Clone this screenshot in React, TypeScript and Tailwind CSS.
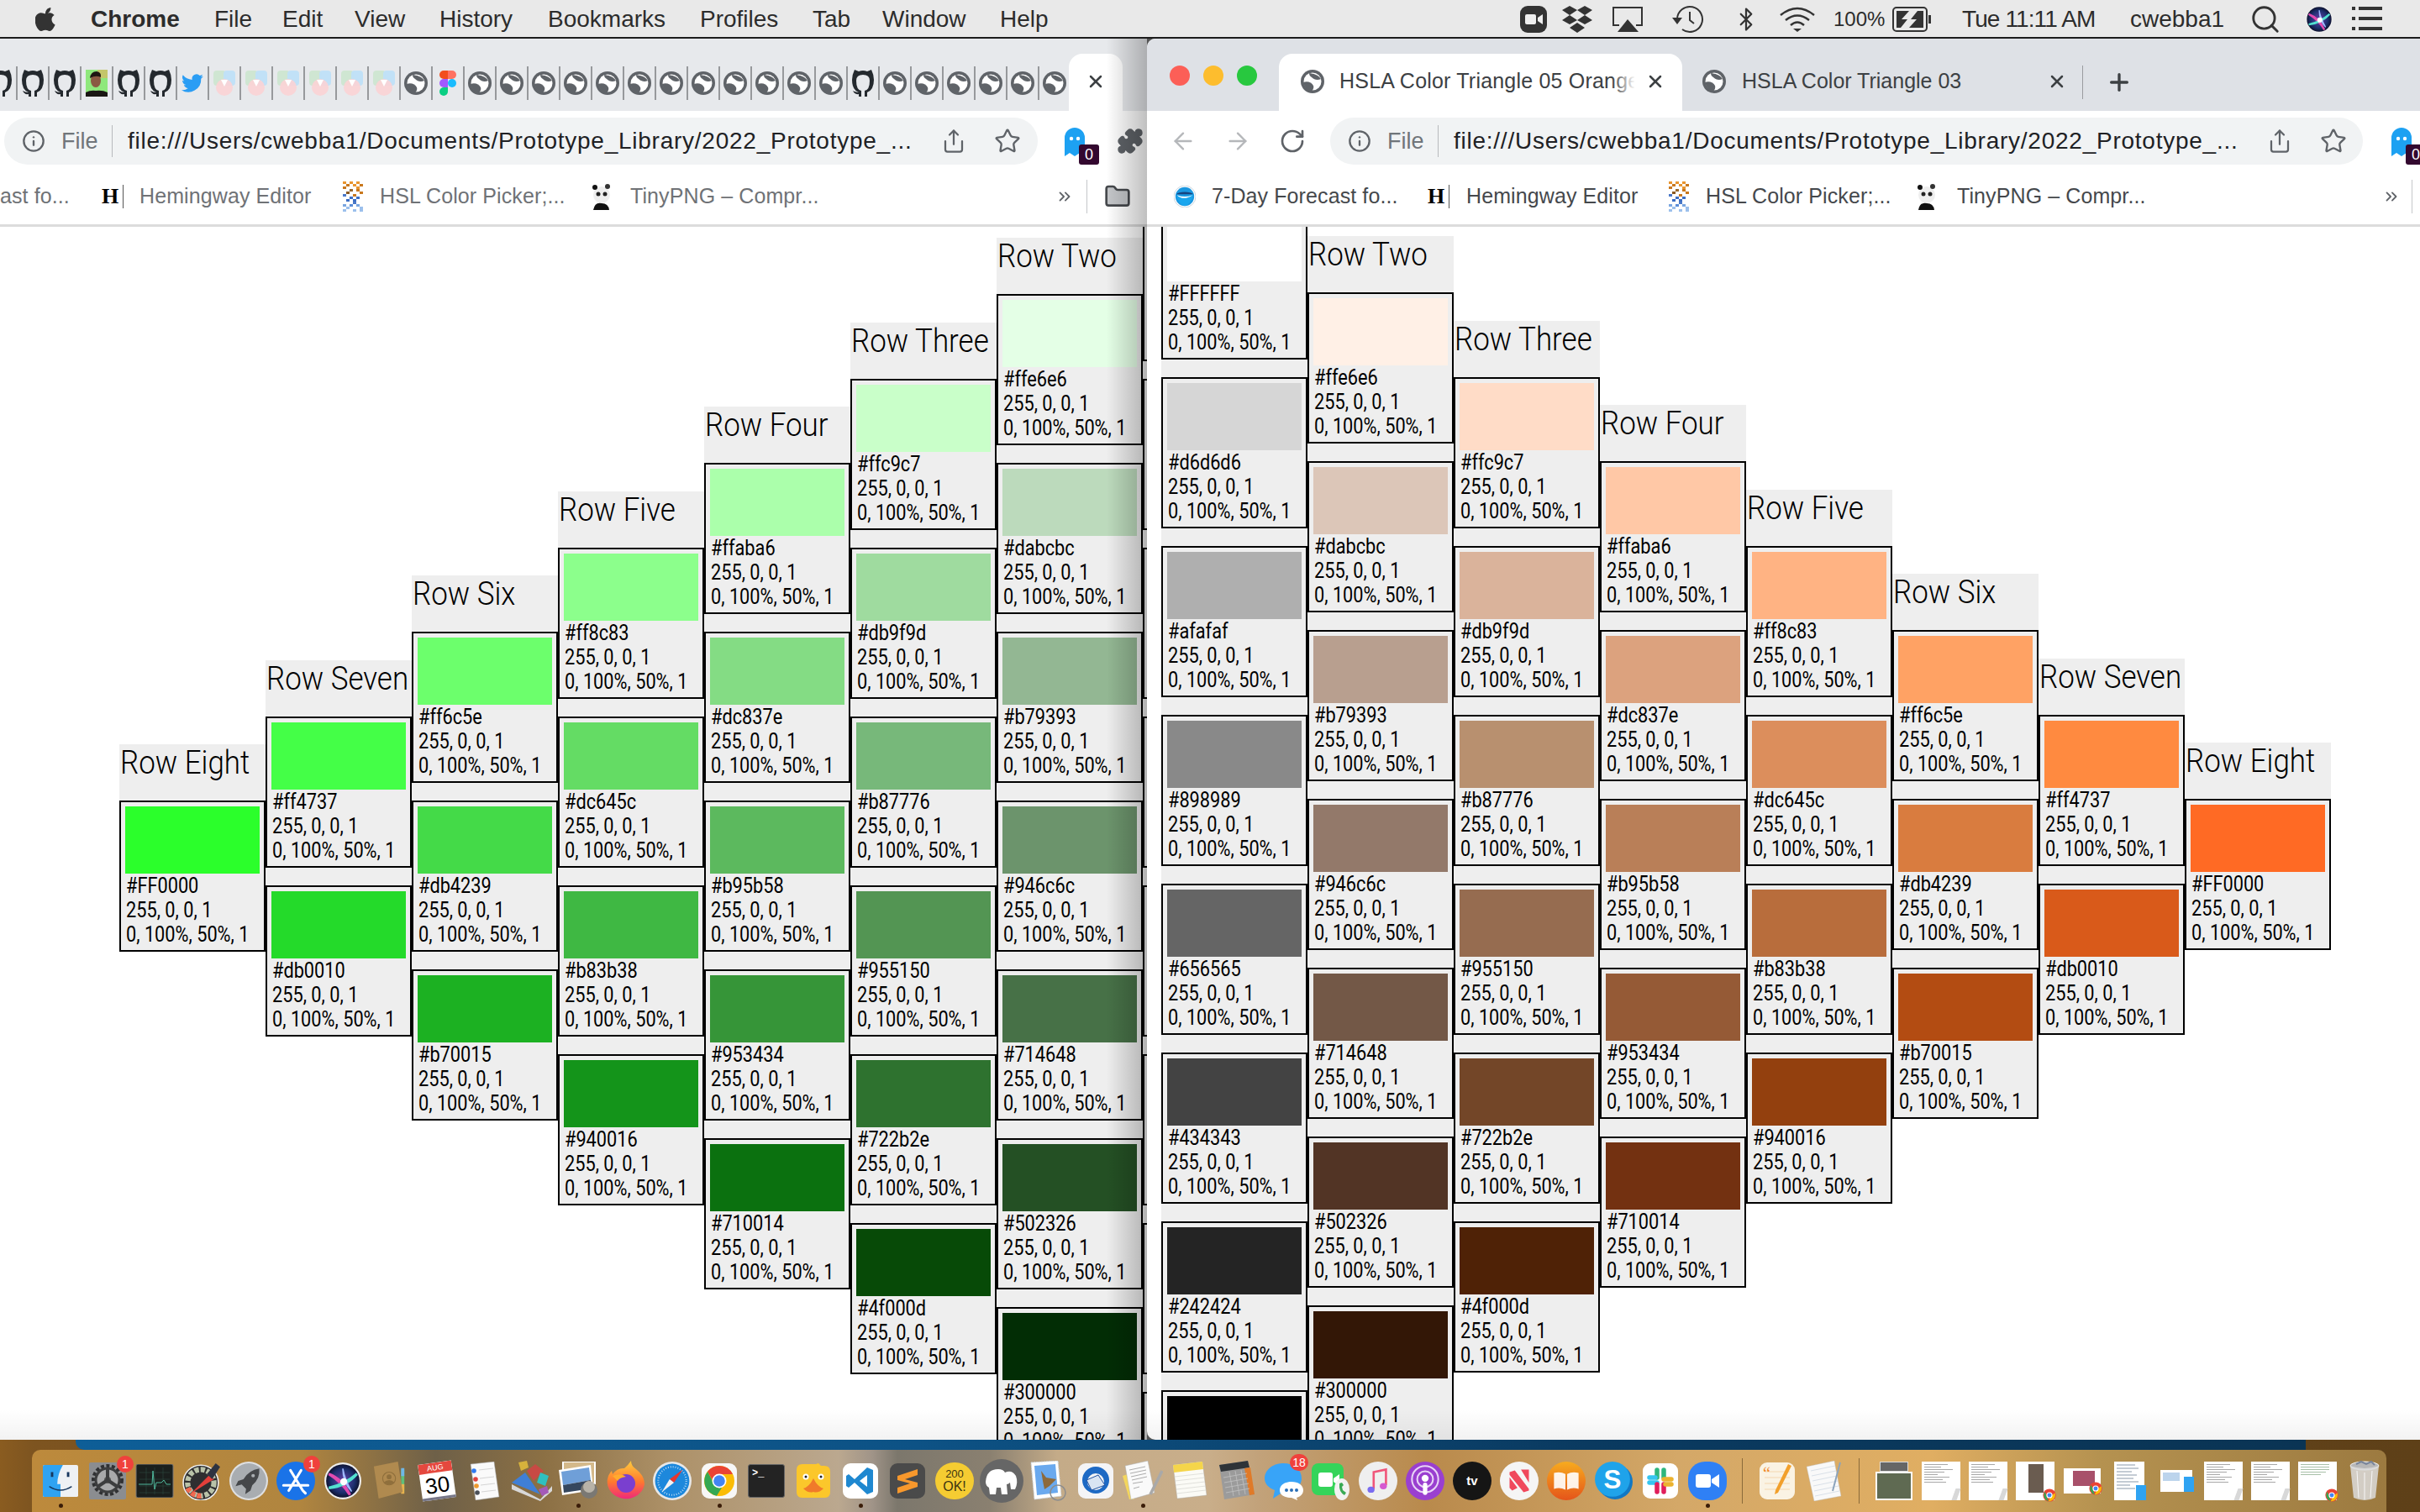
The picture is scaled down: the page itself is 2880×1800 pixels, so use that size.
import React from 'react';
import { ArrowLeft, ArrowRight, RotateCw, Info, Star, Share, Puzzle, X, Plus, Search, Bluetooth, Folder, ChevronsRight } from 'lucide-react';

type Card = { hex: string; color: string };
type Column = { title: string; cards: Card[] };

const labels: [string, string[]][] = [
    ['Row One', ['#FFFFFF', '#d6d6d6', '#afafaf', '#898989', '#656565', '#434343', '#242424', '#000000']],
    ['Row Two', ['#ffe6e6', '#dabcbc', '#b79393', '#946c6c', '#714648', '#502326', '#300000']],
    ['Row Three', ['#ffc9c7', '#db9f9d', '#b87776', '#955150', '#722b2e', '#4f000d']],
    ['Row Four', ['#ffaba6', '#dc837e', '#b95b58', '#953434', '#710014']],
    ['Row Five', ['#ff8c83', '#dc645c', '#b83b38', '#940016']],
    ['Row Six', ['#ff6c5e', '#db4239', '#b70015']],
    ['Row Seven', ['#ff4737', '#db0010']],
    ['Row Eight', ['#FF0000']],
];

const greys = ['#ffffff', '#d6d6d6', '#afafaf', '#898989', '#656565', '#434343', '#242424', '#000000'];

const greens = [
    greys,
    ['#e4ffe6', '#bcdabc', '#93b793', '#6c946c', '#477147', '#245024', '#022d05'],
    ['#c9ffc9', '#9fdb9f', '#77b87a', '#539553', '#2e722f', '#074a07'],
    ['#abffab', '#84dc84', '#5cb95e', '#369538', '#0b710f'],
    ['#8cff8c', '#64dc64', '#3fb843', '#14941a'],
    ['#6cff6c', '#44da48', '#1cb122'],
    ['#44ff47', '#24da2a'],
    ['#2bff2b'],
];

const oranges = [
    greys,
    ['#fff0e6', '#dcc6b8', '#b89f8f', '#93796a', '#735847', '#523425', '#331706'],
    ['#ffdcc7', '#dab39b', '#b8906f', '#966c50', '#734628', '#4f2206'],
    ['#ffc8a6', '#dca27e', '#b97f58', '#955a36', '#733111'],
    ['#ffb383', '#dc8e5c', '#b86d3c', '#93400e'],
    ['#ffa264', '#d97c3f', '#b34c12'],
    ['#ff8a40', '#d95a1a'],
    ['#ff6a24'],
];

const build = (palette: string[][]): Column[] =>
    labels.map(([title, hexes], i) => ({
        title,
        cards: hexes.map((hex, j) => ({ hex, color: palette[i][j] })),
    }));

const ColorCard: React.FC<{ card: Card; bare?: boolean }> = ({ card, bare }) => (
    <div className="h-[180px] border-2 border-black p-[5px] shrink-0">
        <div className="h-[80px] w-[160px]" style={{ backgroundColor: card.color }} />
        {!bare && (
            <div className="text-[25px] leading-[29px] font-normal text-black pl-px">
                <div className="origin-left scale-x-[0.87] whitespace-nowrap">{card.hex}</div>
                <div className="origin-left scale-x-[0.87] whitespace-nowrap">255, 0, 0, 1</div>
                <div className="origin-left scale-x-[0.87] whitespace-nowrap">0, 100%, 50%, 1</div>
            </div>
        )}
    </div>
);

const ColorColumn: React.FC<{ column: Column; top: number; bare?: boolean }> = ({ column, top, bare }) => (
    <div className="w-[174px] shrink-0 bg-[#eeeeee] flex flex-col gap-[21px] font-['Roboto',sans-serif]" style={{ marginTop: top }}>
        <div className="h-[67px] -mb-[21px] text-[38px] leading-[44px] font-light text-black pl-px">
            {!bare && <div className="origin-left scale-x-[0.92] whitespace-nowrap">{column.title}</div>}
        </div>
        {column.cards.map((card) => (
            <ColorCard key={card.hex} card={card} bare={bare} />
        ))}
    </div>
);

const Globe: React.FC<{ className?: string }> = ({ className }) => (
    <svg viewBox="0 0 28 28" className={className ?? 'w-[28px] h-[28px]'}>
        <circle cx="14" cy="14" r="14" fill="#5f6368" />
        <circle cx="14" cy="14" r="10.5" fill="#fff" />
        <path d="M10 4 C15 5 20 5 24 11 C20 13 16 12 13 9 C11 8 10 6 10 4 Z" fill="#5f6368" />
        <path d="M3 15 C8 13 13 15 15 19 C16 22 14 25 12 26 C7 24 4 20 3 15 Z" fill="#5f6368" />
    </svg>
);

const Octocat = () => (
    <svg viewBox="0 0 26 32" className="w-[26px] h-[32px]">
        <path
            fill="#24292e"
            d="M3 0 L8 2 Q13 0 18 2 L23 0 Q26 6 26 12 Q26 24 18 27 V32 H15 V25 Q21 24 21 13 Q21 6 13 6 Q5 6 5 13 Q5 24 11 25 V32 H8 V29 Q3 30 1 25 Q4 27 8 27 Q0 24 0 12 Q0 6 3 0 Z"
        />
    </svg>
);

const TriangleFavicon = () => (
    <svg viewBox="0 0 26 30" className="w-[26px] h-[30px]">
        <rect x="0" y="0" width="15" height="18" rx="4" fill="#cfe6d2" />
        <rect x="12" y="0" width="14" height="18" rx="4" fill="#bfe0f8" fillOpacity="0.95" />
        <circle cx="13" cy="20" r="10" fill="#fbd3d5" fillOpacity="0.9" />
        <path d="M9 11 H17 L13 19 Z" fill="#fff" />
    </svg>
);

const Twitter = () => (
    <svg viewBox="0 0 24 24" className="w-[28px] h-[28px]">
        <path
            fill="#2a9df4"
            d="M23 5c-.8.4-1.700.6-2.600.7.9-.6 1.600-1.400 2-2.500-.9.5-1.800.9-2.900 1.100A4.600 4.600 0 0 0 11.700 8.500 13 13 0 0 1 2.300 3.700a4.600 4.600 0 0 0 1.400 6.100c-.7 0-1.400-.2-2-.6 0 2.200 1.600 4.100 3.700 4.600-.7.200-1.400.2-2.100.1.600 1.800 2.300 3.100 4.300 3.200A9.200 9.200 0 0 1 .8 19a13 13 0 0 0 20-11.600c.9-.6 1.600-1.400 2.200-2.400z"
        />
    </svg>
);

const Figma = () => (
    <svg viewBox="0 0 20 30" className="w-[20px] h-[30px]">
        <path d="M5 0 H10 V10 H5 A5 5 0 0 1 5 0 Z" fill="#f24e1e" />
        <path d="M10 0 H15 A5 5 0 0 1 15 10 H10 Z" fill="#ff7262" />
        <path d="M5 10 H10 V20 H5 A5 5 0 0 1 5 10 Z" fill="#a259ff" />
        <circle cx="15" cy="15" r="5" fill="#1abcfe" />
        <path d="M5 20 H10 V25 A5 5 0 1 1 5 20 Z" fill="#0acf83" />
    </svg>
);

const Portrait = () => (
    <svg viewBox="0 0 26 32" className="w-[26px] h-[32px]">
        <rect width="26" height="32" fill="#8fe87c" />
        <rect x="14" width="12" height="10" fill="#c4c66a" />
        <ellipse cx="12" cy="13" rx="6" ry="8" fill="#8a5a42" />
        <path d="M0 32 V27 Q6 24 12 25 Q20 24 26 27 V32 Z" fill="#1a1714" />
        <path d="M5 10 Q6 2 13 2 Q19 3 18 9 Q12 6 5 10 Z" fill="#1d1712" />
    </svg>
);

type Tab = 'git' | 'photo' | 'bird' | 'tri' | 'globe' | 'figma';
const favicons: Tab[] = [
    'git', 'git', 'git', 'photo', 'git', 'git', 'bird', 'tri', 'tri', 'tri', 'tri', 'tri', 'tri', 'globe', 'figma',
    'globe', 'globe', 'globe', 'globe', 'globe', 'globe', 'globe', 'globe', 'globe', 'globe', 'globe', 'globe',
    'git', 'globe', 'globe', 'globe', 'globe', 'globe', 'globe',
];

const Favicon: React.FC<{ kind: Tab }> = ({ kind }) => {
    if (kind === 'git') return <Octocat />;
    if (kind === 'photo') return <Portrait />;
    if (kind === 'bird') return <Twitter />;
    if (kind === 'tri') return <TriangleFavicon />;
    if (kind === 'figma') return <Figma />;
    return <Globe />;
};

const GhostExt = () => (
    <div className="relative w-[28px] h-[46px]">
        <svg viewBox="0 0 24 34" className="w-[24px] h-[36px]">
            <path d="M0 12 A12 12 0 0 1 24 12 V34 L18 30 L12 34 L6 30 L0 34 Z" fill="#1da1f2" />
            <circle cx="8" cy="13" r="2.200" fill="#fff" />
            <circle cx="16" cy="13" r="2.200" fill="#fff" />
        </svg>
        <div className="absolute left-[17px] top-[21px] w-[24px] h-[24px] rounded-[3px] bg-[#33082f] text-white text-[18px] leading-[24px] text-center">0</div>
    </div>
);

const Omnibox: React.FC<{ className: string }> = ({ className }) => (
    <div className={`h-[56px] shrink-0 rounded-full bg-[#f1f3f4] flex items-center pl-[21px] ${className}`}>
        <Info className="w-[28px] h-[28px] text-[#5f6368] shrink-0" strokeWidth={2} />
        <span className="ml-[19px] text-[27px] text-[#70757a] w-[60px]">File</span>
        <div className="w-px h-[38px] bg-[#b8babd] shrink-0" />
        <span className="ml-[18px] text-[28px] tracking-[0.75px] text-[#202124] whitespace-nowrap w-[934px] overflow-hidden">file:///Users/cwebba1/Documents/Prototype_Library/2022_Prototype_...</span>
        <Share className="ml-[34px] w-[30px] h-[32px] text-[#5f6368] shrink-0" strokeWidth={1.800} />
        <Star className="ml-[33px] w-[32px] h-[32px] text-[#5f6368] shrink-0" strokeWidth={1.800} />
    </div>
);

const NoaaIcon = () => (
    <svg viewBox="0 0 28 28" className="w-[26px] h-[26px] shrink-0">
        <circle cx="14" cy="14" r="14" fill="#fff" stroke="#c9d4dc" />
        <circle cx="14" cy="14" r="12" fill="#1a97e0" />
        <path d="M3 11 H25 A12 5 0 0 0 3 11 Z" fill="#17437f" />
        <path d="M3 12 Q14 17 25 11 Q22 24 14 26 Q6 24 3 12 Z" fill="#1aa6ee" />
        <path d="M4 12 Q12 20 24 12 Q14 16 4 12 Z" fill="#fff" />
    </svg>
);

const HemingwayIcon = () => (
    <span className="w-[26px] shrink-0 font-['Liberation_Serif',serif] font-bold text-[26px] leading-[28px] text-black border-r border-[#555]">H</span>
);

const PickerIcon = () => (
    <svg viewBox="0 0 8 12" preserveAspectRatio="none" className="w-[32px] h-[36px] shrink-0" shapeRendering="crispEdges">
        {[
            [1, 0, '#e8952f'], [3, 0, '#e8952f'], [5, 0, '#e8952f'], [2, 1, '#c9781e'], [4, 1, '#e8952f'], [6, 1, '#c9781e'],
            [1, 2, '#c9781e'], [5, 2, '#e8952f'], [3, 3, '#9a6a2e'], [5, 3, '#c9781e'], [2, 4, '#8a5a22'], [6, 4, '#c9781e'], [4, 5, '#c9781e'], [1, 5, '#4a78c8'],
            [3, 6, '#3c6ec4'], [5, 6, '#3c6ec4'], [2, 7, '#3c6ec4'], [4, 7, '#3c6ec4'], [4, 8, '#4a78c8'], [1, 9, '#7aa6e0'], [3, 9, '#5b8ed8'],
            [5, 9, '#7aa6e0'], [2, 10, '#9cc0ec'], [6, 10, '#9cc0ec'], [4, 11, '#9cc0ec'], [6, 11, '#9cc0ec'], [1, 11, '#9cc0ec'],
        ].map(([x, y, c], i) => (
            <rect key={i} x={x as number} y={y as number} width="1" height="1" fill={c as string} />
        ))}
    </svg>
);

const PandaIcon = () => (
    <svg viewBox="0 0 24 32" className="w-[26px] h-[32px] shrink-0">
        <ellipse cx="13" cy="14" rx="10" ry="10" fill="#eee" />
        <circle cx="5" cy="5" r="3" fill="#111" />
        <circle cx="20" cy="4" r="3" fill="#333" />
        <circle cx="9" cy="13" r="2.500" fill="#222" />
        <circle cx="17" cy="13" r="2.500" fill="#222" />
        <path d="M3 32 Q5 22 13 24 Q21 24 22 32 Z" fill="#111" />
    </svg>
);

const Bookmark: React.FC<{ label: string; width: string; dark?: boolean }> = ({ label, width, dark }) => (
    <span className={`text-[25px] tracking-[0.1px] whitespace-nowrap shrink-0 ${width} ${dark ? 'text-[#45484c]' : 'text-[#6f7276]'}`}>{label}</span>
);

const LeftWindow = () => (
    <div className="relative w-[1365px] shrink-0 flex flex-col bg-white overflow-hidden">
        <div className="h-[86px] bg-[#e7e9ec] flex items-start pt-[18px] shrink-0">
            <div className="flex w-[1272px] h-[68px] overflow-hidden items-start pt-[15px]">
                <div className="flex -ml-[17px] shrink-0">
                    {favicons.map((kind, i) => (
                        <div key={i} className="w-[38px] h-[40px] border-r-2 border-[#97999c] flex items-center justify-center shrink-0">
                            <Favicon kind={kind} />
                        </div>
                    ))}
                </div>
            </div>
            <div className="w-[64px] h-[68px] bg-white rounded-t-[16px] flex items-center justify-center pb-[2px]">
                <X className="w-[24px] h-[24px] text-[#3c4043]" strokeWidth={2.500} />
            </div>
        </div>
        <div className="h-[73px] pt-[8px] pl-[5px] flex items-start shrink-0">
            <Omnibox className="w-[1230px]" />
            <div className="ml-[32px] mt-[11px]"><GhostExt /></div>
            <Puzzle className="ml-[34px] mt-[12px] w-[32px] h-[32px] text-[#5f6368] fill-[#5f6368] shrink-0" />
        </div>
        <div className="h-[65px] border-b-[3px] border-[#dcdcdc] flex items-center shrink-0 pb-[5px]">
            <Bookmark label="ast fo..." width="w-[121px]" />
            <HemingwayIcon />
            <span className="w-[19px] shrink-0" />
            <Bookmark label="Hemingway Editor" width="w-[238px]" />
            <PickerIcon />
            <span className="w-[16px] shrink-0" />
            <Bookmark label="HSL Color Picker;..." width="w-[250px]" />
            <PandaIcon />
            <span className="w-[22px] shrink-0" />
            <Bookmark label="TinyPNG – Compr..." width="w-[506px]" />
            <ChevronsRight className="w-[22px] h-[22px] text-[#5f6368] shrink-0" />
            <div className="ml-[15px] w-px h-[40px] bg-[#c5c7ca] shrink-0" />
            <Folder className="ml-[20px] w-[32px] h-[34px] text-[#45484c] fill-[#c4c6c9] shrink-0" />
        </div>
        <div className="flex-1 min-h-0 overflow-hidden flex items-start pl-[142px]">
            {build(greens).slice().reverse().slice(0, 7).map((column, i) => (
                <ColorColumn key={column.title} column={column} top={616 - i * 100.5} />
            ))}
            <ColorColumn column={build(greens)[0]} top={-87.5} bare />
        </div>
        <div className="absolute inset-y-0 right-0 w-[48px] bg-linear-to-r from-black/0 to-black/25" />
        <div className="absolute bottom-0 inset-x-0 h-[36px] bg-linear-to-b from-black/0 to-black/5" />
    </div>
);

const RightWindow = () => (
    <div className="relative w-[1515px] shrink-0 flex flex-col bg-white overflow-hidden rounded-l-[10px]">
        <div className="h-[86px] bg-[#dee1e6] flex items-start pt-[18px] shrink-0">
            <div className="flex gap-[16px] pl-[27px] pt-[14px] w-[157px] shrink-0">
                <div className="w-[24px] h-[24px] rounded-full bg-[#fc5f57]" />
                <div className="w-[24px] h-[24px] rounded-full bg-[#fdbd2e]" />
                <div className="w-[24px] h-[24px] rounded-full bg-[#28c83f]" />
            </div>
            <div className="w-[480px] h-[68px] bg-white rounded-t-[16px] flex items-center pb-[2px] pl-[26px] shrink-0 relative">
                <Globe className="w-[28px] h-[28px] shrink-0" />
                <span className="ml-[18px] text-[25px] tracking-[0.2px] text-[#3c4043] w-[351px] whitespace-nowrap overflow-hidden">HSLA Color Triangle 05 Orange</span>
                <div className="absolute left-[396px] top-[16px] w-[28px] h-[36px] bg-linear-to-r from-white/0 to-white" />
                <X className="w-[24px] h-[24px] text-[#3c4043] absolute left-[436px] top-[21px]" strokeWidth={2.500} />
            </div>
            <div className="flex items-center h-[68px] pb-[2px] pl-[24px] relative w-[477px] shrink-0">
                <Globe className="w-[28px] h-[28px] shrink-0" />
                <span className="ml-[19px] text-[25px] text-[#3c4043] whitespace-nowrap">HSLA Color Triangle 03</span>
                <X className="w-[24px] h-[24px] text-[#3c4043] absolute left-[434px] top-[21px]" strokeWidth={2.500} />
                <div className="absolute left-[476px] top-[14px] w-px h-[40px] bg-[#9a9ca0]" />
            </div>
            <Plus className="ml-[27px] mt-[18px] w-[32px] h-[32px] text-[#3c4043]" strokeWidth={2.500} />
        </div>
        <div className="h-[73px] pt-[8px] flex items-start shrink-0">
            <ArrowLeft className="ml-[27px] mt-[12px] w-[32px] h-[32px] text-[#b5b7ba] shrink-0" strokeWidth={1.800} />
            <ArrowRight className="ml-[33px] mt-[12px] w-[32px] h-[32px] text-[#b5b7ba] shrink-0" strokeWidth={1.800} />
            <RotateCw className="ml-[33px] mt-[12px] w-[32px] h-[32px] text-[#5f6368] shrink-0" strokeWidth={2} />
            <Omnibox className="ml-[29px] w-[1229px]" />
            <div className="ml-[34px] mt-[11px]"><GhostExt /></div>
        </div>
        <div className="h-[65px] border-b-[3px] border-[#dcdcdc] flex items-center shrink-0 pb-[5px] pl-[32px]">
            <NoaaIcon />
            <span className="w-[19px] shrink-0" />
            <Bookmark dark label="7-Day Forecast fo..." width="w-[257px]" />
            <HemingwayIcon />
            <span className="w-[20px] shrink-0" />
            <Bookmark dark label="Hemingway Editor" width="w-[237px]" />
            <PickerIcon />
            <span className="w-[16px] shrink-0" />
            <Bookmark dark label="HSL Color Picker;..." width="w-[249px]" />
            <PandaIcon />
            <span className="w-[24px] shrink-0" />
            <Bookmark dark label="TinyPNG – Compr..." width="w-[506px]" />
            <ChevronsRight className="w-[22px] h-[22px] text-[#5f6368] shrink-0" />
            <div className="ml-[13px] w-px h-[40px] bg-[#c5c7ca] shrink-0" />
        </div>
        <div className="flex-1 min-h-0 overflow-hidden flex items-start pl-[17px]">
            {build(oranges).map((column, i) => (
                <ColorColumn key={column.title} column={column} top={-89.5 + i * 100.5} />
            ))}
        </div>
        <div className="absolute bottom-0 inset-x-0 h-[36px] bg-linear-to-b from-black/0 to-black/5" />
    </div>
);

const SiriOrb: React.FC<{ size: string }> = ({ size }) => (
    <svg viewBox="0 0 44 44" className={size}>
        <defs>
            <radialGradient id="siriBg" cx="50%" cy="50%" r="50%">
                <stop offset="0%" stopColor="#6a3fa8" />
                <stop offset="70%" stopColor="#1c2f6e" />
                <stop offset="100%" stopColor="#0e1230" />
            </radialGradient>
        </defs>
        <circle cx="22" cy="22" r="21" fill="#eee" />
        <circle cx="22" cy="22" r="19" fill="url(#siriBg)" />
        <path d="M6 14 Q22 20 30 38 Q22 24 6 14 Z" fill="#e24bb0" stroke="#e24bb0" strokeWidth="3" />
        <path d="M6 30 Q24 26 38 14 Q26 28 6 30 Z" fill="#52e0d0" stroke="#52e0d0" strokeWidth="3" />
        <path d="M22 8 Q24 20 32 34 Q22 24 22 8 Z" fill="#9fb9ff" stroke="#9fb9ff" strokeWidth="1.500" />
        <circle cx="23" cy="23" r="4" fill="#fff" />
    </svg>
);

const Finder = () => (
    <svg viewBox="0 0 44 40" className="w-[42px] h-[40px]">
        <rect width="44" height="40" rx="2" fill="#eef1f4" />
        <path d="M2 0 H25 Q18 12 18 24 H22 V40 H2 Q0 40 0 38 V2 Q0 0 2 0 Z" fill="#2fa3f2" />
        <rect x="10" y="9" width="3" height="6" fill="#17375e" />
        <rect x="30" y="9" width="3" height="6" fill="#17375e" />
        <path d="M8 27 Q22 36 36 27" fill="none" stroke="#17375e" strokeWidth="1.500" />
    </svg>
);

const SystemPrefs = () => (
    <svg viewBox="0 0 44 44" className="w-[46px] h-[44px]">
        <rect width="44" height="44" rx="2" fill="#8b8d90" />
        <circle cx="22" cy="21" r="17" fill="#8c8d8e" stroke="#303133" strokeWidth="4" strokeDasharray="4 2.500" />
        <circle cx="22" cy="21" r="14" fill="#a8a9aa" stroke="#3c3d3e" strokeWidth="3" />
        <circle cx="22" cy="21" r="4" fill="#555" />
        <path d="M22 8 V21 M10 29 L22 21 L34 29" stroke="#3c3d3e" strokeWidth="4" fill="none" />
    </svg>
);

const ActivityMonitor = () => (
    <svg viewBox="0 0 44 40" className="w-[46px] h-[40px]">
        <rect width="44" height="40" rx="2" fill="#1a1f1d" stroke="#777" strokeWidth="1" />
        <path d="M4 10 H40 M4 18 H40 M4 26 H40 M4 34 H40 M12 4 V36 M22 4 V36 M32 4 V36" stroke="#2e4a42" strokeWidth="0.600" />
        <path d="M3 24 H16 L19 24 L20 8 L22 30 L24 22 H30 L33 19 L36 24 H41" stroke="#4fb89c" strokeWidth="1" fill="none" />
    </svg>
);

const ColorMeter = () => (
    <svg viewBox="0 0 44 44" className="w-[46px] h-[46px]">
        <circle cx="21" cy="24" r="20" fill="#2e2e30" stroke="#eee" strokeWidth="1.500" />
        <circle cx="21" cy="24" r="15" fill="none" stroke="#b9c2a8" strokeWidth="6" strokeDasharray="5 2" />
        <path d="M6 30 A16 16 0 0 0 22 39" fill="none" stroke="#f06a50" strokeWidth="6" strokeDasharray="5 2" />
        <path d="M10 36 L30 16 L36 20 Z" fill="#e33f3a" />
        <path d="M28 14 L38 2 L43 6 L34 20 Z" fill="#2d3340" />
    </svg>
);

const Launchpad = () => (
    <svg viewBox="0 0 44 44" className="w-[46px] h-[46px]">
        <circle cx="22" cy="22" r="22" fill="#dfe0e2" />
        <circle cx="22" cy="22" r="20" fill="#a9adb1" />
        <path d="M34 8 Q22 10 16 20 L10 22 L7 28 L14 26 L19 31 L18 37 L24 33 L26 27 Q35 20 34 8 Z" fill="#45474a" />
        <circle cx="27" cy="16" r="2" fill="#a9adb1" />
    </svg>
);

const AppStore = () => (
    <svg viewBox="0 0 44 44" className="w-[46px] h-[46px]">
        <circle cx="22" cy="22" r="22" fill="#1a73e8" />
        <path d="M16 10 L30 33 M28 10 L14 33 M8 27 H36 M30 33 L33 36" stroke="#fff" strokeWidth="3" strokeLinecap="round" fill="none" />
    </svg>
);

const Contacts = () => (
    <svg viewBox="0 0 44 48" className="w-[42px] h-[48px]">
        <rect x="36" y="10" width="4" height="28" fill="#5fc07a" />
        <rect x="36" y="8" width="4" height="10" fill="#6fb7e8" />
        <rect x="36" y="28" width="4" height="12" fill="#e8b34f" />
        <path d="M2 6 L32 0 L38 38 L8 46 Z" fill="#b08a4f" />
        <circle cx="21" cy="21" r="8" fill="none" stroke="#8f6f3c" strokeWidth="1.200" />
        <circle cx="21" cy="19" r="3" fill="#8f6f3c" />
        <path d="M14 26 Q21 20 28 26 Q21 31 14 26 Z" fill="#8f6f3c" />
    </svg>
);

const CalendarIcon = () => (
    <div className="w-[40px] h-[44px] -rotate-[8deg] bg-white border-b-[3px] border-[#778] flex flex-col items-center overflow-hidden">
        <div className="w-full h-[12px] bg-[#e5483e] text-white text-[9px] leading-[12px] text-center">AUG</div>
        <div className="text-[26px] leading-[30px] font-light text-black">30</div>
    </div>
);

const Reminders = () => (
    <svg viewBox="0 0 38 46" className="w-[38px] h-[46px]">
        <path d="M3 3 L31 0 L37 42 L9 46 Z" fill="#fafafa" stroke="#9a9a9a" strokeWidth="0.500" />
        <circle cx="7" cy="11" r="2.800" fill="#2f7af0" />
        <circle cx="9" cy="21" r="2.800" fill="#e0423e" />
        <circle cx="10" cy="29" r="2.800" fill="#ee9a2e" />
        <circle cx="11" cy="37" r="2.800" fill="#4a4f57" />
        <path d="M13 10 L30 8 M14 20 L31 18 M15 28 L32 26 M16 36 L33 34" stroke="#d5d5d5" />
    </svg>
);

const ColorSync = () => (
    <svg viewBox="0 0 50 48" className="w-[50px] h-[48px]">
        <path d="M2 28 L36 46 L50 30 V36 L36 48 L2 34 Z" fill="#d8d8d8" />
        <path d="M2 26 L18 14 L36 40 Z" fill="#3f7fd6" />
        <path d="M20 12 L30 4 L40 12 L28 24 Z" fill="#c84a44" />
        <path d="M10 2 L20 0 L22 8 L13 12 Z" fill="#d6b23c" />
        <path d="M36 14 L46 18 L42 30 L32 26 Z" fill="#2fc0c0" />
        <path d="M34 34 L44 30 L46 38 L38 42 Z" fill="#a45ab8" />
    </svg>
);

const Preview = () => (
    <svg viewBox="0 0 48 46" className="w-[48px] h-[46px]">
        <rect x="6" y="0" width="38" height="26" fill="#d4b98a" stroke="#fff" strokeWidth="2" />
        <path d="M1 10 L39 4 L42 34 L5 40 Z" fill="#fff" />
        <path d="M4 12 L37 7 L39 22 L6 28 Z" fill="#6f9fd8" />
        <path d="M6 28 L39 22 L40 32 L7 37 Z" fill="#35475e" />
        <circle cx="37" cy="34" r="10" fill="#7a7873" />
        <circle cx="37" cy="30" r="7" fill="#b8b3a8" />
    </svg>
);

const Firefox = () => (
    <svg viewBox="0 0 46 48" className="w-[46px] h-[48px]">
        <defs>
            <linearGradient id="fxBg" x1="0" y1="0" x2="0" y2="1">
                <stop offset="0%" stopColor="#ffcb3e" />
                <stop offset="55%" stopColor="#ff7a2e" />
                <stop offset="100%" stopColor="#f0287a" />
            </linearGradient>
        </defs>
        <path d="M30 0 Q30 6 36 10 Q46 18 46 28 A22 20 0 1 1 2 22 Q3 16 7 12 L8 16 Q14 8 22 9 Q26 6 30 0 Z" fill="url(#fxBg)" />
        <circle cx="24" cy="27" r="11" fill="#7a3fcf" />
        <path d="M8 18 Q18 14 24 19 Q16 20 14 24 Z" fill="#ffab2e" />
    </svg>
);

const Safari = () => (
    <svg viewBox="0 0 44 44" className="w-[46px] h-[46px]">
        <circle cx="22" cy="22" r="22" fill="#e8e8e8" />
        <circle cx="22" cy="22" r="19.500" fill="#1d88dc" />
        <circle cx="22" cy="22" r="16" fill="none" stroke="#cfe6f8" strokeWidth="2" strokeDasharray="0.800 2" />
        <path d="M34 9 L24 24 L19 20 Z" fill="#e8352e" />
        <path d="M10 35 L24 24 L19 20 Z" fill="#f4f4f4" />
    </svg>
);

const ChromeApp = () => (
    <svg viewBox="0 0 42 42" className="w-[42px] h-[42px]">
        <rect width="42" height="42" rx="9" fill="#f7f7f7" />
        <circle cx="21" cy="21" r="18" fill="#fbbc05" />
        <path d="M21 3 A18 18 0 0 1 37 13 H21 A8 8 0 0 0 13 20 L7 10 A18 18 0 0 1 21 3 Z" fill="#ea4335" />
        <path d="M7 10 L15 25 A8 8 0 0 0 24 29 L18 38.700 A18 18 0 0 1 7 10 Z" fill="#34a853" />
        <circle cx="21" cy="21" r="8.500" fill="#fff" />
        <circle cx="21" cy="21" r="6.800" fill="#4285f4" />
    </svg>
);

const Terminal = () => (
    <div className="w-[44px] h-[40px] rounded-[3px] bg-[#232323] border border-[#666] text-white text-[12px] leading-[14px] pl-[4px] pt-[3px] font-['Liberation_Mono',monospace] font-bold">&gt;_</div>
);

const Cyberduck = () => (
    <svg viewBox="0 0 42 42" className="w-[42px] h-[42px]">
        <path d="M8 1 H24 L27 0 L30 3 H34 Q41 3 41 10 V34 Q41 41 34 41 H8 Q1 41 1 34 V8 Q1 1 8 1 Z" fill="#fbc72b" />
        <circle cx="12" cy="16" r="3.500" fill="#fff" />
        <circle cx="30" cy="16" r="3.500" fill="#fff" />
        <circle cx="12" cy="16" r="1.500" fill="#222" />
        <circle cx="30" cy="16" r="1.500" fill="#222" />
        <path d="M21 18 Q26 28 33 30 Q27 36 21 34 Q15 36 9 30 Q16 28 21 18 Z" fill="#f07a2a" />
    </svg>
);

const VsCode = () => (
    <svg viewBox="0 0 42 42" className="w-[42px] h-[42px]">
        <rect width="42" height="42" rx="9" fill="#fff" />
        <path d="M29 5 L36 8 V34 L29 37 L14 23 L7 29 L4 27 V15 L7 13 L14 19 Z M29 14 L20 21 L29 28 Z" fill="#1f88d0" fillRule="evenodd" />
    </svg>
);

const Sublime = () => (
    <svg viewBox="0 0 42 42" className="w-[42px] h-[42px]">
        <rect width="42" height="42" rx="9" fill="#4a4a4a" />
        <path d="M9 15 L33 7 V14 L18 19 L33 23 V28 L9 36 V29 L24 24 L9 20 Z" fill="#f8982c" />
    </svg>
);

const Ok200 = () => (
    <div className="w-[46px] h-[44px] rounded-full bg-[#f5cc32] flex flex-col items-center justify-center font-['Liberation_Sans',sans-serif] text-[#3c3410]">
        <div className="text-[13px] leading-[14px]">200</div>
        <div className="text-[16px] leading-[16px]">OK!</div>
    </div>
);

const Mamp = () => (
    <svg viewBox="0 0 52 52" className="w-[52px] h-[52px]">
        <circle cx="26" cy="26" r="26" fill="#666" />
        <path d="M7 27 Q8 12 22 12 Q28 12 30 16 Q38 12 43 20 Q46 28 42 36 H37 L36 28 Q34 30 32 30 L33 42 H26 L25 34 H20 L19 42 H12 L11 34 Q7 32 7 27 Z" fill="#fff" />
    </svg>
);

const MailIcon = () => (
    <svg viewBox="0 0 46 48" className="w-[46px] h-[48px]">
        <path d="M2 2 L34 0 L38 42 L6 46 Z" fill="#fff" stroke="#cfd6dd" strokeDasharray="2 1" />
        <path d="M6 6 L31 4 L34 38 L9 41 Z" fill="#6aa9ee" />
        <path d="M14 12 L20 20 L32 22 L24 30 L18 34 L16 24 Z" fill="#8d6a3c" />
        <circle cx="34" cy="38" r="9" fill="none" stroke="#8d8d8d" strokeWidth="1.500" />
    </svg>
);

const Thunderbird = () => (
    <svg viewBox="0 0 42 42" className="w-[42px] h-[42px]">
        <rect width="42" height="42" rx="9" fill="#f4f4f6" />
        <circle cx="21" cy="20" r="16" fill="#1d69c4" />
        <circle cx="21" cy="22" r="10" fill="#f4f4f6" />
        <path d="M10 20 L24 14 L32 26 L16 32 Z" fill="#d9e4f2" stroke="#1d4fa0" />
    </svg>
);

const TextEditIcon = () => (
    <svg viewBox="0 0 48 48" className="w-[48px] h-[48px]">
        <path d="M0 18 L6 16 L14 46 L8 46 Z" fill="#f4d65c" />
        <path d="M3 6 L30 0 L38 38 L10 46 Z" fill="#fafafa" stroke="#aaa" strokeWidth="0.500" />
        <path d="M8 11 L27 7 M9 15 L28 11 M10 19 L28 15 M11 23 L29 19 M12 27 L24 25 M13 33 L20 31" stroke="#8a8a8a" strokeWidth="0.700" />
        <path d="M33 40 L47 12" stroke="#a9a9a9" strokeWidth="3.500" />
    </svg>
);

const Notes = () => (
    <svg viewBox="0 0 42 46" className="w-[42px] h-[46px]">
        <path d="M1 4 L36 0 L41 40 L6 44 Z" fill="#fbfbf6" stroke="#aaa" strokeWidth="0.400" />
        <path d="M1 4 L36 0 L37 9 L2 13 Z" fill="#f5d54a" />
        <path d="M3 18 L38 14 M3.500 23 L38.500 19 M4 28 L39 24 M5 33 L40 29 M5.500 38 L40 34" stroke="#d6d6d0" strokeWidth="0.700" />
    </svg>
);

const Calculator = () => (
    <svg viewBox="0 0 42 48" className="w-[42px] h-[48px]">
        <path d="M0 5 L34 0 L42 40 L6 46 Z" fill="#9b9b9b" />
        <path d="M0 5 L34 0 L36 8 L2 13 Z" fill="#2e3338" />
        <path d="M30 9 L37 8 L42 40 L36 41 Z" fill="#e07a28" />
        <path d="M5 20 L33 15 M6 26 L34 21 M7 32 L35 27 M8 38 L36 33 M12 13 L17 42 M19 12 L24 41 M26 11 L31 40" stroke="#c2c2c2" strokeWidth="0.800" />
    </svg>
);

const Messages = () => (
    <svg viewBox="0 0 46 46" className="w-[46px] h-[46px]">
        <path d="M22 2 C36 2 44 10 44 20 C44 30 34 36 22 36 L10 44 L12 34 C4 31 0 26 0 20 C0 10 10 2 22 2 Z" fill="#38a4f8" />
        <path d="M32 24 C40 24 46 28 46 34 C46 39 42 42 38 43 L39 46 L32 43 C24 43 18 40 18 34 C18 28 24 24 32 24 Z" fill="#fff" />
        <circle cx="26" cy="34" r="2" fill="#2a6fb8" />
        <circle cx="32" cy="34" r="2" fill="#2a6fb8" />
        <circle cx="38" cy="34" r="2" fill="#2a6fb8" />
    </svg>
);

const Facetime = () => (
    <svg viewBox="0 0 46 46" className="w-[46px] h-[46px]">
        <rect x="0" y="2" width="38" height="38" rx="8" fill="#35d45a" />
        <rect x="8" y="13" width="17" height="17" rx="3" fill="#fff" />
        <path d="M26 20 L33 15 V29 L26 24 Z" fill="#fff" />
        <ellipse cx="36" cy="33" rx="9" ry="13" fill="#f2f2f2" />
        <path d="M33 26 Q32 36 39 40 L41 37 L37 34 L36 30 L38 28 L36 25 Z" fill="#3aaa55" />
    </svg>
);

const Music = () => (
    <svg viewBox="0 0 44 44" className="w-[46px] h-[46px]">
        <circle cx="22" cy="22" r="22" fill="#efefef" />
        <path d="M17 31 V12 L31 9 V27" fill="none" stroke="#f0567a" strokeWidth="2.500" />
        <ellipse cx="14" cy="32" rx="4" ry="3.500" fill="#7a6cf0" />
        <ellipse cx="28" cy="28" rx="4" ry="3.500" fill="#d55ad0" />
    </svg>
);

const Podcasts = () => (
    <svg viewBox="0 0 44 44" className="w-[46px] h-[46px]">
        <circle cx="22" cy="22" r="22" fill="#9a3fd0" />
        <circle cx="22" cy="20" r="15" fill="none" stroke="#e8d4f6" strokeWidth="2" />
        <circle cx="22" cy="20" r="9" fill="none" stroke="#e8d4f6" strokeWidth="2" />
        <circle cx="22" cy="19" r="4" fill="#fff" />
        <rect x="19.500" y="24" width="5" height="14" rx="2.500" fill="#fff" />
    </svg>
);

const AppleTv = () => (
    <div className="w-[46px] h-[46px] rounded-full bg-[#151515] flex items-center justify-center text-white text-[15px] font-bold font-['Liberation_Sans',sans-serif]">tv</div>
);

const NewsIcon = () => (
    <svg viewBox="0 0 44 44" className="w-[46px] h-[46px]">
        <circle cx="22" cy="22" r="22" fill="#f5f5f5" />
        <path d="M11 12 L17 10 L33 31 L33 33 L27 35 L11 15 Z M11 18 L20 30 L14 33 L11 30 Z M24 9 L33 9 L33 24 Z" fill="#f0485c" />
    </svg>
);

const Books = () => (
    <svg viewBox="0 0 44 44" className="w-[46px] h-[46px]">
        <defs>
            <linearGradient id="bookBg" x1="0" y1="0" x2="0" y2="1">
                <stop offset="0%" stopColor="#f7ab1e" />
                <stop offset="100%" stopColor="#e5541a" />
            </linearGradient>
        </defs>
        <circle cx="22" cy="22" r="22" fill="url(#bookBg)" />
        <path d="M8 13 Q15 11 21 14 V32 Q15 29 8 31 Z M36 13 Q29 11 23 14 V32 Q29 29 36 31 Z" fill="#fff" fillOpacity="0.9" />
    </svg>
);

const Skype = () => (
    <svg viewBox="0 0 44 44" className="w-[46px] h-[46px]">
        <circle cx="24" cy="23" r="20" fill="#1178c4" />
        <circle cx="21" cy="20" r="20" fill="#1fa3ea" />
        <text x="21" y="31" textAnchor="middle" fontSize="30" fontWeight="700" fill="#fff" fontFamily="Liberation Sans, sans-serif">S</text>
    </svg>
);

const Slack = () => (
    <svg viewBox="0 0 42 42" className="w-[42px] h-[42px]">
        <rect width="42" height="42" rx="9" fill="#fff" />
        <g strokeWidth="5.500" strokeLinecap="round">
            <path d="M8 23 H17" stroke="#36c5f0" />
            <path d="M17 8 V17" stroke="#2eb67d" />
            <path d="M25 8 V17" stroke="#2eb67d" />
            <path d="M25 19 H34" stroke="#ecb22e" />
            <path d="M25 25 V34" stroke="#e01e5a" />
            <path d="M17 25 V34" stroke="#e01e5a" />
            <path d="M8 17 H15" stroke="#36c5f0" />
            <path d="M27 25 H34" stroke="#ecb22e" />
        </g>
    </svg>
);

const ZoomApp = () => (
    <svg viewBox="0 0 46 46" className="w-[46px] h-[46px]">
        <rect width="46" height="46" rx="20" fill="#2f80f5" />
        <rect x="9" y="15" width="18" height="16" rx="3" fill="#fff" />
        <path d="M28 21 L37 15 V31 L28 25 Z" fill="#fff" />
    </svg>
);

const Pages = () => (
    <svg viewBox="0 0 42 44" className="w-[42px] h-[44px]">
        <rect width="42" height="44" rx="9" fill="#faf3e4" />
        <path d="M6 11 H36 M6 18 H36 M6 25 H36 M6 32 H36" stroke="#f4d7b0" />
        <path d="M34 2 L38 4 L22 36 L18 38 L19 33 Z" fill="#f2a02c" />
        <text x="4" y="20" fontSize="20" fill="#f08a2c" fontFamily="Liberation Serif, serif">“</text>
    </svg>
);

const DocPad = () => (
    <svg viewBox="0 0 44 48" className="w-[44px] h-[48px]">
        <path d="M1 7 L34 0 L42 42 L10 48 Z" fill="#f9f9f9" stroke="#bbb" strokeWidth="0.400" />
        <path d="M6 12 L35 6 M7 18 L36 12 M8 24 L37 18 M9 30 L38 24 M10 36 L39 30 M11 42 L40 36" stroke="#d9e0e8" />
        <path d="M32 36 L41 2" stroke="#8ca4bc" strokeWidth="2" />
    </svg>
);

const Thumb: React.FC<{ kind: 'text' | 'photo' | 'pink' | 'sheet' | 'mini' | 'mail'; badge?: 'chrome' | 'finder' | 'pen' }> = ({ kind, badge }) => (
    <div className={`relative bg-white ${kind === 'mini' ? 'w-[38px] h-[26px]' : kind === 'pink' ? 'w-[44px] h-[30px]' : kind === 'sheet' ? 'w-[36px] h-[46px]' : 'w-[46px] h-[46px]'} flex flex-col gap-[2px] p-[3px] overflow-visible`}>
        {kind === 'photo' && <div className="w-[18px] h-[34px] ml-[12px] bg-[#6a5c50]" />}
        {kind === 'pink' && <div className="w-[26px] h-[18px] ml-[8px] bg-[#a8506a]" />}
        {kind === 'sheet' && [22, 26, 18, 24, 20, 26, 16, 22].map((w, i) => (
            <div key={i} className="h-[2px] bg-[#c4ccd4]" style={{ width: w }} />
        ))}
        {kind === 'mini' && <div className="w-[20px] h-[10px] bg-[#bcd4ec]" />}
        {kind === 'text' && [28, 20, 34, 24, 16, 30, 22, 26].map((w, i) => (
            <div key={i} className="h-px bg-[#a8a8a8]" style={{ width: w }} />
        ))}
        {kind === 'mail' && [34, 34, 34, 30, 24].map((w, i) => (
            <div key={i} className="h-px bg-[#a8c0a8]" style={{ width: w }} />
        ))}
        {badge === 'chrome' && <div className="absolute -right-[2px] -bottom-[2px]"><svg viewBox="0 0 42 42" className="w-[16px] h-[16px]"><circle cx="21" cy="21" r="20" fill="#ea4335" /><path d="M7 10 L18 40 A20 20 0 0 1 7 10 Z" fill="#34a853" /><path d="M38 14 A20 20 0 0 1 18 40 L24 26 Z" fill="#fbbc05" /><circle cx="21" cy="21" r="8" fill="#4285f4" stroke="#fff" strokeWidth="3" /></svg></div>}
        {badge === 'finder' && <div className="absolute -right-[2px] bottom-0 w-[12px] h-[18px] bg-[#2fa3f2]" />}
        {badge === 'pen' && <div className="absolute right-[2px] bottom-0 w-[6px] h-[14px] bg-[#d8d8d8] skew-x-[-20deg]" />}
    </div>
);

const ThumbStack = () => (
    <div className="flex flex-col items-center">
        <div className="w-[34px] h-[12px] bg-[#666] border border-[#ddd]" />
        <div className="w-[44px] h-[34px] bg-white p-[2px]"><div className="w-full h-full bg-[#5f6a52]" /></div>
    </div>
);

const Trash = () => (
    <svg viewBox="0 0 36 48" className="w-[36px] h-[48px]">
        <ellipse cx="18" cy="6" rx="17" ry="5" fill="#b7b7b7" stroke="#f2f2f2" />
        <path d="M1 6 L5 44 Q18 50 31 44 L35 6 Q18 12 1 6 Z" fill="#dcdcdc" fillOpacity="0.85" />
        <path d="M9 12 L11 44 M18 14 V46 M27 12 L25 44" stroke="#f7f7f7" />
        <path d="M8 4 L14 1 L20 4 L26 1 L30 5" stroke="#77849a" strokeWidth="2" fill="none" />
    </svg>
);

const Badge: React.FC<{ n: string; className: string }> = ({ n, className }) => (
    <div className={`absolute rounded-full bg-[#f0413c] text-white text-[14px] leading-[20px] h-[20px] min-w-[20px] text-center font-['Liberation_Sans',sans-serif] ${className}`}>{n}</div>
);

type Item = { node: React.ReactNode; dot?: boolean; badge?: string; badgeClass?: string };

const dockApps: Item[] = [
    { node: <Finder />, dot: true },
    { node: <SystemPrefs />, badge: '1', badgeClass: 'left-[34px] top-[-6px]' },
    { node: <ActivityMonitor /> },
    { node: <ColorMeter /> },
    { node: <Launchpad /> },
    { node: <AppStore />, badge: '1', badgeClass: 'left-[32px] top-[-6px]' },
    { node: <SiriOrb size="w-[46px] h-[46px]" /> },
    { node: <Contacts /> },
    { node: <CalendarIcon /> },
    { node: <Reminders /> },
    { node: <ColorSync /> },
    { node: <Preview />, dot: true },
    { node: <Firefox /> },
    { node: <Safari /> },
    { node: <ChromeApp />, dot: true },
    { node: <Terminal /> },
    { node: <Cyberduck /> },
    { node: <VsCode />, dot: true },
    { node: <Sublime /> },
    { node: <Ok200 /> },
    { node: <Mamp /> },
    { node: <MailIcon /> },
    { node: <Thunderbird /> },
    { node: <TextEditIcon />, dot: true },
    { node: <Notes /> },
    { node: <Calculator /> },
    { node: <Messages />, badge: '18', badgeClass: 'left-[30px] top-[-8px] w-[22px]' },
    { node: <Facetime /> },
    { node: <Music /> },
    { node: <Podcasts /> },
    { node: <AppleTv /> },
    { node: <NewsIcon /> },
    { node: <Books /> },
    { node: <Skype /> },
    { node: <Slack /> },
    { node: <ZoomApp />, dot: true },
];

const dockDocs: Item[] = [{ node: <Pages /> }, { node: <DocPad /> }];

const dockThumbs: Item[] = [
    { node: <ThumbStack /> },
    { node: <Thumb kind="text" badge="pen" /> },
    { node: <Thumb kind="text" badge="pen" /> },
    { node: <Thumb kind="photo" badge="chrome" /> },
    { node: <Thumb kind="pink" badge="chrome" /> },
    { node: <Thumb kind="sheet" badge="finder" /> },
    { node: <Thumb kind="mini" badge="finder" /> },
    { node: <Thumb kind="text" badge="pen" /> },
    { node: <Thumb kind="text" badge="pen" /> },
    { node: <Thumb kind="mail" badge="chrome" /> },
    { node: <Trash /> },
];

const DockItem: React.FC<{ item: Item }> = ({ item }) => (
    <div className="relative w-[56px] h-[74px] shrink-0 flex justify-center pt-[13px]">
        <div className="relative h-[48px] flex items-center justify-center">
            {item.node}
            {item.badge && <Badge n={item.badge} className={item.badgeClass ?? ''} />}
        </div>
        {item.dot && <div className="absolute left-[26px] top-[64px] w-[5px] h-[5px] rounded-full bg-[#3a1c08]" />}
    </div>
);

const DockDivider = () => (
    <div className="w-[27px] h-[74px] shrink-0 flex justify-center pt-[10px]">
        <div className="w-px h-[54px] bg-[#8a6a3a]" />
    </div>
);

const Dock = () => (
    <div className="h-[86px] shrink-0 bg-[linear-gradient(90deg,#8a5c20_0,#7d5420_40px,#5e4018_2880px)] flex flex-col">
        <div className="h-[12px] ml-[90px] mr-[136px] rounded-bl-[10px] bg-[linear-gradient(90deg,#0e5e97,#0d5285_1000px,#0a3a60_1800px,#0a3454)]" />
        <div className="h-[74px] ml-[38px] mr-[40px] pl-[6px] rounded-t-[10px] flex bg-[linear-gradient(90deg,#bd8a3c_0,#b0853f_320px,#6e6048_480px,#8c7044_610px,#ad9168_760px,#bba88f_960px,#a09488_1000px,#7c776c_1030px,#8a8070_1140px,#c4ab88_1220px,#c9ae8a_1400px,#c2a27a_1460px,#b98a4c_1660px,#d4a868_1960px,#e0ae62_2260px,#b59250_2460px,#9c7a40_2802px)]">
            {dockApps.map((item, i) => <DockItem key={i} item={item} />)}
            <DockDivider />
            {dockDocs.map((item, i) => <DockItem key={i} item={item} />)}
            <DockDivider />
            {dockThumbs.map((item, i) => <DockItem key={i} item={item} />)}
        </div>
    </div>
);

const menus: [string, string][] = [
    ['File', 'w-[81px]'],
    ['Edit', 'w-[86px]'],
    ['View', 'w-[101px]'],
    ['History', 'w-[129px]'],
    ['Bookmarks', 'w-[181px]'],
    ['Profiles', 'w-[134px]'],
    ['Tab', 'w-[83px]'],
    ['Window', 'w-[140px]'],
    ['Help', 'w-[70px]'],
];

const AppleLogo = () => (
    <svg viewBox="0 0 24 28" className="w-[26px] h-[30px] shrink-0">
        <path
            fill="#333"
            d="M17 1c.2 2-.6 3.600-1.600 4.800-1.100 1.200-2.700 2.200-4.300 2-.2-1.800.7-3.600 1.600-4.700C13.800 1.900 15.500 1.100 17 1zM21.900 20.100c-.6 1.400-.9 2-1.700 3.200-1.100 1.700-2.700 3.800-4.600 3.800-1.700 0-2.200-1.100-4.500-1.100-2.300 0-2.800 1.100-4.600 1.100-2 0-3.400-1.900-4.500-3.600C-.9 18.800-1.200 13 .7 10c1.300-2.100 3.400-3.300 5.400-3.300 2 0 3.300 1.100 5 1.100 1.600 0 2.600-1.100 4.900-1.100 1.800 0 3.700 1 5 2.700-4.400 2.400-3.700 8.700.9 10.700z"
        />
    </svg>
);

const ZoomMenu = () => (
    <svg viewBox="0 0 32 32" className="w-[32px] h-[32px] shrink-0">
        <rect width="32" height="32" rx="9" fill="#333" />
        <rect x="6" y="10" width="13" height="12" rx="2" fill="#eee" />
        <path d="M21 14 L27 10 V22 L21 18 Z" fill="#eee" />
    </svg>
);

const DropboxMenu = () => (
    <svg viewBox="0 0 38 32" className="w-[38px] h-[32px] shrink-0 fill-[#333]">
        <path d="M10 0 L19 5 L10 11 L1 5 Z M28 0 L37 5 L28 11 L19 5 Z M10 11 L19 17 L10 22 L1 17 Z M28 11 L37 17 L28 22 L19 17 Z M19 20 L28 26 L19 32 L10 26 Z" />
    </svg>
);

const AirPlay = () => (
    <svg viewBox="0 0 36 30" className="w-[36px] h-[30px] shrink-0">
        <path d="M8 22 H1 V1 H35 V22 H28" fill="none" stroke="#333" strokeWidth="2" />
        <path d="M18 15 L31 30 H6 Z" fill="#333" />
    </svg>
);

const TimeMachine = () => (
    <svg viewBox="0 0 38 34" className="w-[38px] h-[34px] shrink-0 fill-none stroke-[#333]">
        <path d="M6 17 A15 15 0 1 1 12 29" strokeWidth="2" />
        <path d="M21 8 V18 L26 22" strokeWidth="2" />
        <path d="M0 15 H12 L6 23 Z" fill="#333" stroke="none" />
    </svg>
);

const Wifi = () => (
    <svg viewBox="0 0 42 30" className="w-[42px] h-[30px] shrink-0 fill-none stroke-[#333]">
        <path d="M1 10 Q21 -6 41 10" strokeWidth="2.500" />
        <path d="M7 16 Q21 5 35 16" strokeWidth="2.500" />
        <path d="M13 22 Q21 15 29 22" strokeWidth="2.500" />
        <path d="M16 26 H26 L21 30 Z" fill="#333" stroke="none" />
    </svg>
);

const Battery = () => (
    <svg viewBox="0 0 46 30" className="w-[46px] h-[30px] shrink-0">
        <rect x="1" y="1" width="40" height="28" rx="4" fill="none" stroke="#333" strokeWidth="2" />
        <rect x="43" y="10" width="3" height="10" fill="#333" />
        <path d="M5 5 H20 L11 15 H18 L10 25 H5 Z M37 5 V25 H20 L29 15 H22 L30 5 Z" fill="#333" />
    </svg>
);

const ListIcon = () => (
    <svg viewBox="0 0 36 30" className="w-[36px] h-[30px] shrink-0 fill-[#333]">
        <path d="M0 0 H4 V4 H0 Z M8 0 H36 V4 H8 Z M0 12 H4 V16 H0 Z M8 12 H36 V16 H8 Z M0 24 H4 V28 H0 Z M8 24 H36 V28 H8 Z" />
    </svg>
);

const MenuBar = () => (
    <div className="h-[46px] shrink-0 bg-[#e9e9e9] border-b-[2px] border-[#1c1c1c] flex items-center pt-[1px] text-[28px] text-[#2c2c2c]">
        <div className="ml-[42px]"><AppleLogo /></div>
        <span className="ml-[40px] w-[147px] font-bold">Chrome</span>
        {menus.map(([label, width]) => (
            <span key={label} className={`${width} shrink-0`}>{label}</span>
        ))}
        <div className="ml-[549px]"><ZoomMenu /></div>
        <div className="ml-[17px]"><DropboxMenu /></div>
        <div className="ml-[23px]"><AirPlay /></div>
        <div className="ml-[35px]"><TimeMachine /></div>
        <Bluetooth className="ml-[35px] w-[30px] h-[36px] text-[#333] shrink-0" strokeWidth={1.800} />
        <div className="ml-[25px]"><Wifi /></div>
        <span className="ml-[22px] w-[70px] text-[24px] shrink-0">100%</span>
        <Battery />
        <span className="ml-[37px] w-[200px] tracking-[-0.900px] whitespace-nowrap shrink-0">Tue 11:11 AM</span>
        <span className="w-[142px] font-medium shrink-0">cwebba1</span>
        <Search className="w-[38px] h-[38px] text-[#333] shrink-0" strokeWidth={1.800} />
        <div className="ml-[28px]"><SiriOrb size="w-[34px] h-[34px]" /></div>
        <div className="ml-[22px]"><ListIcon /></div>
    </div>
);

const App: React.FC = () => (
    <div className="w-[2880px] h-[1800px] overflow-hidden flex flex-col bg-[#e9e9e9] font-['Liberation_Sans',sans-serif]">
        <MenuBar />
        <div className="flex flex-1 min-h-0 bg-[#555]">
            <LeftWindow />
            <RightWindow />
        </div>
        <Dock />
    </div>
);

export default App;
